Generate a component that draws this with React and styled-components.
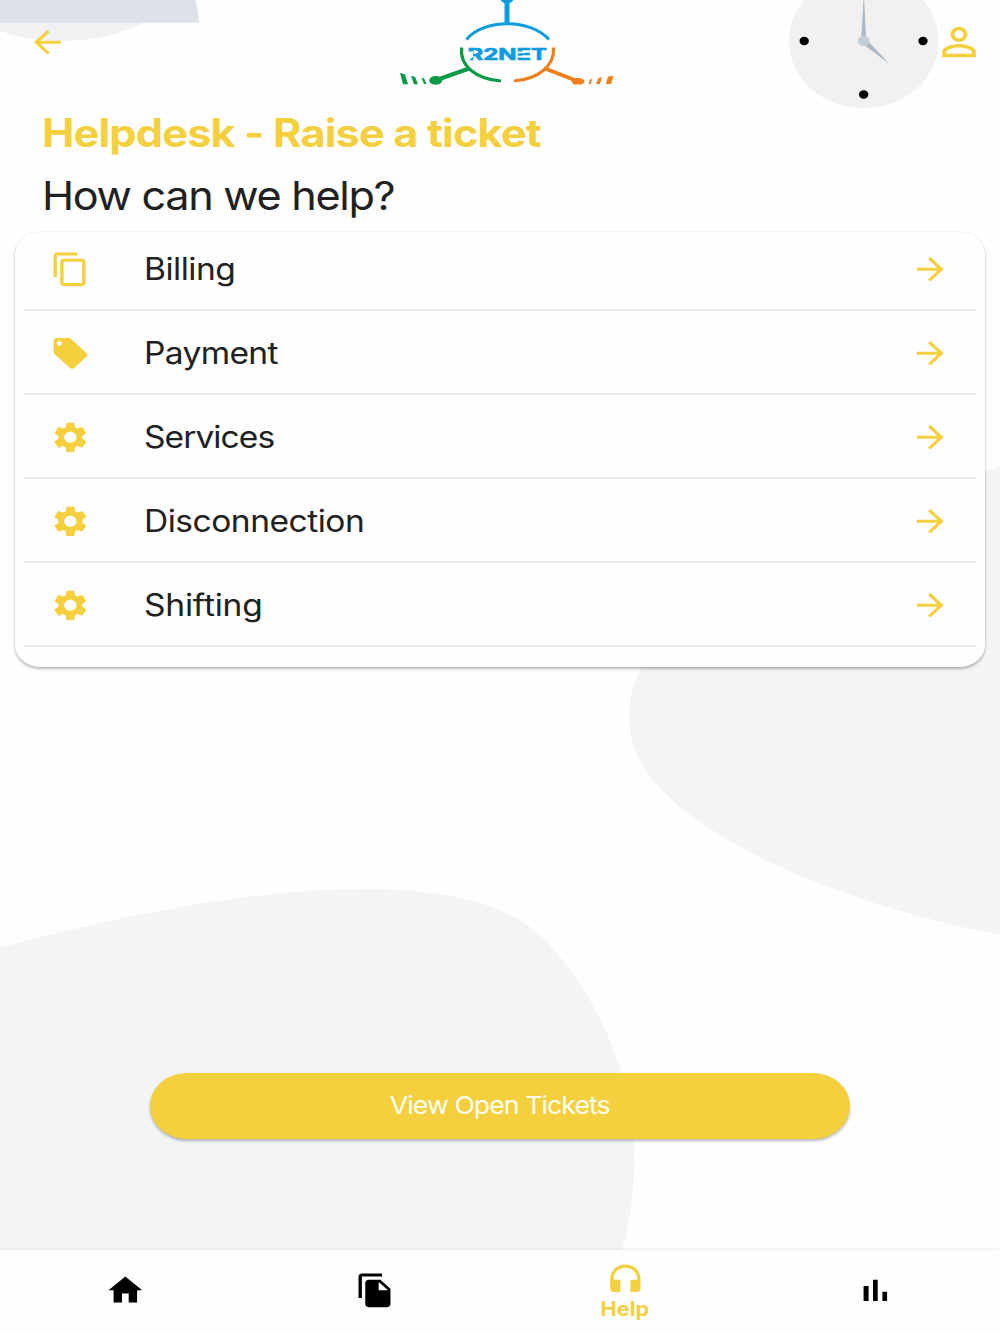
import React from "react";
import styled, { createGlobalStyle } from "styled-components";
import {
  MdArrowBack,
  MdArrowForward,
  MdContentCopy,
  MdFileCopy,
  MdHeadphones,
  MdHome,
  MdLocalOffer,
  MdPersonOutline,
  MdSettings,
} from "react-icons/md";

const YELLOW = "#f4d03e";

const GlobalStyle = createGlobalStyle`
  * { box-sizing: border-box; }
  body { margin: 0; background: #fefefe; }
`;

const Screen = styled.div`
  position: relative;
  display: flex;
  flex-direction: column;
  width: 1000px;
  height: 1334px;
  overflow: hidden;
  background: #fefefe;
  color: #212121;
  font-family: Inter, Roboto, sans-serif;
`;

const Backdrop = styled.svg`
  position: absolute;
  inset: 0;
`;

const Header = styled.header`
  position: relative;
  display: flex;
  justify-content: space-between;
  height: 84px;
  padding: 0 15px 0 26.5px;
`;

const IconButton = styled.button`
  display: flex;
  align-items: center;
  height: 84px;
  padding: 0;
  border: 0;
  background: none;
  color: ${YELLOW};
`;

/* Material glyph, drawn slightly wider than tall */
const Glyph = styled.span`
  display: flex;
  svg {
    width: ${(p) => p.$size || 36.7}px;
    height: ${(p) => p.$size || 36.7}px;
    margin: 0 ${(p) => (p.$size || 36.7) * 0.055}px;
    transform: scaleX(1.1);
  }
`;

const Logo = styled.svg`
  margin-left: 19px;
`;

const Stretch = styled.span`
  display: inline-block;
  white-space: nowrap;
  letter-spacing: ${(p) => p.$tracking || 0}px;
  transform: scaleX(${(p) => p.$x || 1.1});
  transform-origin: ${(p) => p.$origin || "left"} center;
`;

const Intro = styled.section`
  position: relative;
  height: 148px;
  padding: 26px 0 0 42px;
`;

const Title = styled.h1`
  margin: 0;
  color: ${YELLOW};
  font-size: 39px;
  line-height: 46px;
  font-weight: 700;
`;

const Subtitle = styled.h2`
  margin: 15px 0 0;
  font-size: 40px;
  line-height: 50px;
  font-weight: 400;
`;

const Card = styled.ul`
  position: relative;
  height: 434.5px;
  margin: 0 15px;
  padding: 0 8px 0 9px;
  list-style: none;
  background: #fefefe;
  border-radius: 25px / 22px;
  box-shadow: 0 2px 3px rgba(0, 0, 0, 0.27), 0 0 2px rgba(0, 0, 0, 0.08);
`;

const Row = styled.li`
  display: flex;
  align-items: center;
  height: 84px;
  padding: 1px 26.5px 0 26px;
  border-bottom: 2px solid #eeeeee;
  color: ${YELLOW};
  &:first-child { margin-top: -4.6px; }
`;

const RowLabel = styled.span`
  flex: 1;
  margin-left: 53px;
  padding-top: 1px;
  color: #212121;
  font-size: 30.5px;
  line-height: 40px;
`;

const Actions = styled.div`
  position: relative;
  display: flex;
  justify-content: center;
  margin-top: 406px;
`;

const TicketsButton = styled.button`
  width: 700px;
  height: 66.5px;
  padding: 0;
  border: 0;
  border-radius: 37px / 33.25px;
  background: ${YELLOW};
  color: #fffef6;
  font: 400 24.7px/65px Inter, Roboto, sans-serif;
  box-shadow: 0 2px 3px rgba(0, 0, 0, 0.28);
`;

const TabBar = styled.nav`
  position: relative;
  display: grid;
  grid-template-columns: repeat(4, 1fr);
  height: 84.5px;
  margin-top: auto;
  background: #fefefe;
  box-shadow: 0 -1px 2px rgba(0, 0, 0, 0.07);
`;

const Tab = styled.a`
  display: flex;
  flex-direction: column;
  align-items: center;
  padding-top: ${(p) => (p.$active ? 10.5 : 22)}px;
  color: ${(p) => (p.$active ? YELLOW : "#000")};
  font-size: 19.5px;
  line-height: 24px;
  font-weight: 700;
`;

function StatsIcon() {
  return (
    <svg viewBox="0 0 24 24" fill="currentColor">
      <path d="M5 9.2h3V19H5zM10.6 5h2.8v14h-2.8zM16.2 13H19v6h-2.8z" />
    </svg>
  );
}

const items = [
  { label: "Billing", Icon: MdContentCopy, tracking: -0.45 },
  { label: "Payment", Icon: MdLocalOffer, tracking: -0.6 },
  { label: "Services", Icon: MdSettings, tracking: -0.85 },
  { label: "Disconnection", Icon: MdSettings, tracking: -0.45 },
  { label: "Shifting", Icon: MdSettings, tracking: -0.2 },
];

const tabs = [
  { Icon: MdHome },
  { Icon: MdFileCopy },
  { Icon: MdHeadphones, label: "Help" },
  { Icon: StatsIcon },
];

function Scenery() {
  return (
    <Backdrop width="1000" height="1334" viewBox="0 0 1000 1334">
      <ellipse cx="62" cy="-36" rx="125" ry="77" fill="#f1f1f1" />
      <path d="M0 0H195.5Q198.5 10 198.8 22.7H0Z" fill="#dde2ea" />
      <path
        d="M1000 466C880 505 629 590 629 716C629 780 690 817 740 847C806 882 890 913 1000 935Z"
        fill="#f2f4f6"
      />
      <path
        d="M0 948C110 918 250 889 365 889C430 889 487 899 523 922C560 947 604 1010 621 1073C639 1130 638 1195 622 1250H0Z"
        fill="#f2f4f6"
      />
      <ellipse cx="863.7" cy="40.8" rx="74.8" ry="67.3" fill="#f1f1f1" />
      <path d="M863.5 0L861 41H866.3L864.2 0Z" fill="#afbac7" />
      <path d="M864 45L868.5 41.5L889.5 64Z" fill="#afbac7" />
      <ellipse cx="863.8" cy="41" rx="5.9" ry="5.3" fill="#c3ced8" />
      <ellipse cx="804.2" cy="41" rx="4.7" ry="4.2" />
      <ellipse cx="923" cy="41" rx="4.7" ry="4.2" />
      <ellipse cx="863.7" cy="94.5" rx="4.7" ry="4.2" />
    </Backdrop>
  );
}

function BrandLogo() {
  return (
    <Logo width="240" height="90" viewBox="390 0 240 90" fill="none">
      <g stroke="#0d9ddf" strokeWidth="3">
        <path d="M466.5 39.5C484 18.5 530 18.5 549 39.5" />
        <path d="M507 0V23" strokeWidth="5" />
      </g>
      <ellipse cx="507" cy="-0.5" rx="6.2" ry="4" fill="#0d9ddf" />
      <g stroke="#0b9b48">
        <path d="M461.7 47.5C459.5 66 476 79 501 81" strokeWidth="3.2" />
        <path d="M469 68.5L438 79.5" strokeWidth="4" />
      </g>
      <g fill="#0b9b48">
        <ellipse cx="435.7" cy="80.3" rx="6.5" ry="4.4" />
        <path d="M400 73L405 74.2L408 84.2H403Z" />
        <path d="M411 76L415 76.8L418 84.2H414Z" />
        <path d="M421.5 77.8L424 78.2L426.5 84H424Z" />
      </g>
      <g stroke="#ee7f1b">
        <path d="M553.5 47.5C555 66 538 79 514 81" strokeWidth="3.2" />
        <path d="M545 68.5L576 80.5" strokeWidth="4" />
      </g>
      <g fill="#ee7f1b">
        <path d="M571.5 82C572 76.5 584.5 76.5 584.5 82L582 84.5H574Z" />
        <path d="M590 79.5L592.5 79L590.5 84H588.5Z" />
        <path d="M598.5 78L602 77.3L600 84H596Z" />
        <path d="M608 76.5L613.5 75.8L611 84H606Z" />
      </g>
      <text
        x="467.5"
        y="60"
        fill="#0d9ddf"
        stroke="#0d9ddf"
        strokeWidth="0.6"
        fontFamily="Inter, sans-serif"
        fontSize="15.5"
        fontWeight="700"
        textLength="79.5"
        lengthAdjust="spacingAndGlyphs"
      >
        R2NET
      </text>
      <path
        d="M467.5 51.6H473V57L467.5 61.5Z M517.8 51.4H525V53.2H517.8Z M517.8 55.7H525V57.5H517.8Z"
        fill="#fefefe"
      />
    </Logo>
  );
}

export default function App() {
  return (
    <Screen>
      <GlobalStyle />
      <Scenery />
      <Header>
        <IconButton aria-label="Back">
          <Glyph><MdArrowBack /></Glyph>
        </IconButton>
        <BrandLogo />
        <IconButton aria-label="Profile">
          <Glyph $size={46}><MdPersonOutline /></Glyph>
        </IconButton>
      </Header>
      <Intro>
        <Title><Stretch $x={1.11} $tracking={-0.76}>Helpdesk - Raise a ticket</Stretch></Title>
        <Subtitle><Stretch $x={1.08} $tracking={-1.22}>How can we help?</Stretch></Subtitle>
      </Intro>
      <Card>
        {items.map(({ label, Icon, tracking }) => (
          <Row key={label}>
            <Glyph><Icon /></Glyph>
            <RowLabel><Stretch $tracking={tracking}>{label}</Stretch></RowLabel>
            <Glyph><MdArrowForward /></Glyph>
          </Row>
        ))}
      </Card>
      <Actions>
        <TicketsButton>
          <Stretch $origin="center" $x={1.08} $tracking={-0.87}>View Open Tickets</Stretch>
        </TicketsButton>
      </Actions>
      <TabBar>
        {tabs.map(({ Icon, label }, i) => (
          <Tab key={i} $active={Boolean(label)}>
            <Glyph><Icon /></Glyph>
            {label && <Stretch $origin="center" $x={1.11}>{label}</Stretch>}
          </Tab>
        ))}
      </TabBar>
    </Screen>
  );
}
